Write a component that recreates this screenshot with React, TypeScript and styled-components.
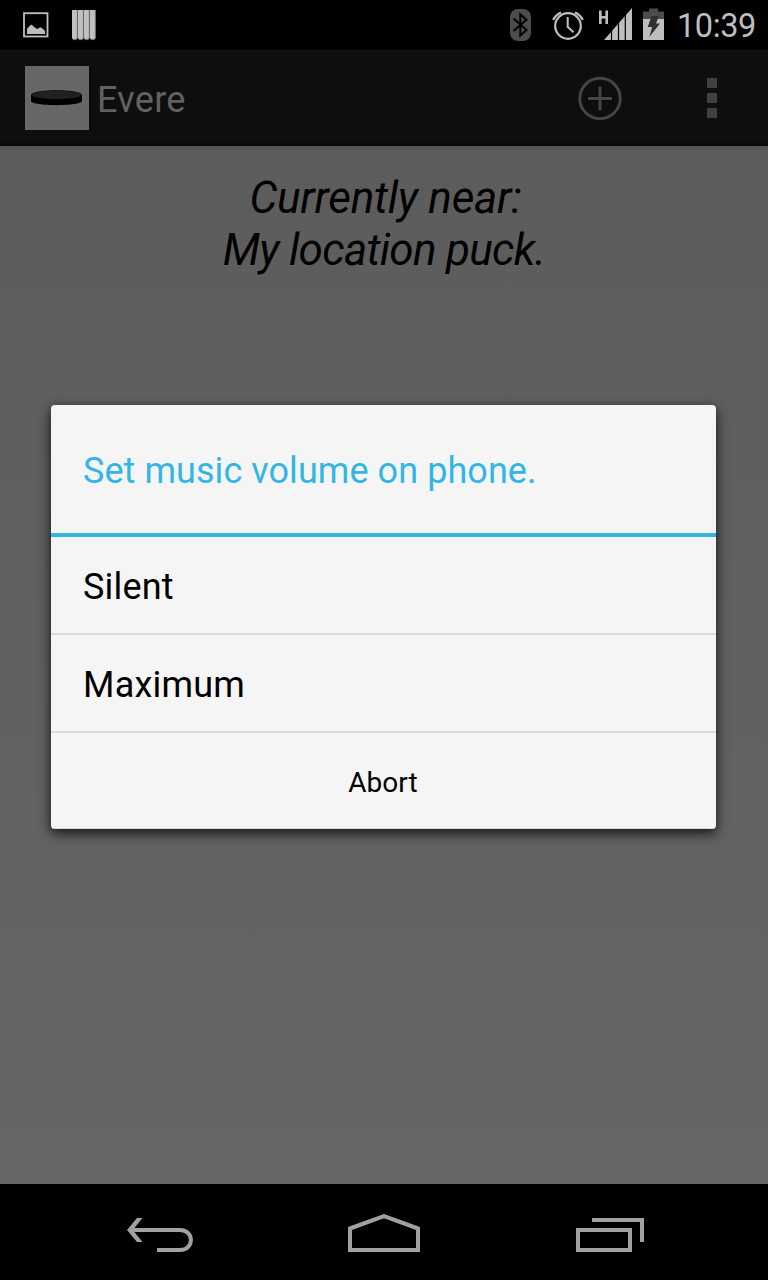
import React from "react";
import styled, { createGlobalStyle } from "styled-components";

const GlobalStyle = createGlobalStyle`
  * { box-sizing: border-box; }
  body { margin: 0; background: #000; font-family: Roboto, "Liberation Sans", sans-serif; }
  svg { display: block; flex: none; }
`;

const Screen = styled.div`
  position: relative;
  width: 768px;
  height: 1280px;
  display: flex;
  flex-direction: column;
  overflow: hidden;
`;

const StatusBar = styled.header`
  height: 50px;
  flex: none;
  display: flex;
  align-items: center;
  justify-content: space-between;
  background: #000;
  color: #bebebe;
`;

const StatusGroup = styled.div`
  display: flex;
  align-items: center;
`;

const Clock = styled.time`
  width: 100px;
  padding: 2px 0 0 9px;
  font-size: 32.5px;
  line-height: 38px;
  letter-spacing: -0.4px;
  white-space: nowrap;
`;

const ActionBar = styled.div`
  height: 96px;
  flex: none;
  display: flex;
  align-items: center;
  padding: 2px 51px 0 25px;
  background: #0e0e0e;
  border-top: 1px solid #151515;
  border-bottom: 3px solid #090909;
`;

const AppTitle = styled.h1`
  flex: 1;
  margin: 4px 0 0 8px;
  font-size: 36px;
  line-height: 42px;
  font-weight: 400;
  letter-spacing: 0.3px;
  color: #616161;
`;

const ActionIcons = styled.div`
  display: flex;
  align-items: center;
  gap: 85px;
`;

const Content = styled.main`
  flex: 1;
  padding-top: 26px;
  background: linear-gradient(#4f4f4f, #5c5c5c 5px, #666 100%);
`;

const Nearby = styled.p`
  margin: 0;
  text-align: center;
  font-size: 44px;
  line-height: 52px;
  font-style: italic;
  color: #000;
`;

const NearbyLine = styled.span<{ $tracking: number; $indent?: number }>`
  display: block;
  padding-left: ${(p) => p.$indent ?? 0}px;
  letter-spacing: ${(p) => p.$tracking}px;
`;

const Dialog = styled.section`
  position: absolute;
  left: 51px;
  top: 405px;
  width: 665px;
  height: 424px;
  display: flex;
  flex-direction: column;
  border-radius: 4px;
  overflow: hidden;
  background: #f5f5f5;
  box-shadow: 0 5px 14px rgba(0, 0, 0, 0.65), 0 2px 6px rgba(0, 0, 0, 0.3);
`;

const DialogTitle = styled.h2`
  height: 132px;
  margin: 0;
  padding: 4px 32px 0;
  border-bottom: 4px solid #33b5e5;
  font-size: 36px;
  line-height: 124px;
  font-weight: 400;
  letter-spacing: 0.06px;
  color: #33b5e5;
`;

const Option = styled.button`
  height: 98px;
  padding: 3px 32px 0;
  border: 0;
  border-bottom: 2px solid #dadada;
  background: transparent;
  text-align: left;
  font: 400 36px/95px Roboto, "Liberation Sans", sans-serif;
  letter-spacing: 0.2px;
  color: #000;
`;

const AbortButton = styled.button`
  height: 96px;
  padding: 3px 1px 0 0;
  border: 0;
  border-bottom: 1px solid #d5d9d9;
  background: transparent;
  font: 400 28px/94px Roboto, "Liberation Sans", sans-serif;
  color: #000;
`;

const NavBar = styled.nav`
  height: 96px;
  flex: none;
  display: grid;
  grid-template-columns: 272px 224px 272px;
  background: #000;
`;

const NavButton = styled.div<{ $pad: string }>`
  padding: ${(p) => p.$pad};
`;

const NotificationIcons = () => (
  <svg width="100" height="50">
    <rect x="24" y="13.2" width="23.5" height="23.3" fill="none" stroke="#bebebe" strokeWidth="1.8" />
    <path d="M27 34V29L29 26.5L31.5 24.5L34.5 27.2L37 29L40.5 27.3L43 29L45 31V34Z" fill="#bebebe" />
    {[72, 78, 84, 90].map((x) => (
      <g key={x}>
        <path d={`M${x} 10H${x + 5}V38L${x + 4} 39.5H${x + 1}L${x} 38Z`} fill="#c0c0c0" />
        <path d={`M${x + 5.4} 10V38.5L${x + 4} 39.6H${x + 0.8}`} fill="none" stroke="#747474" strokeWidth="1" />
      </g>
    ))}
  </svg>
);

const SystemIcons = () => (
  <svg width="168" height="50" viewBox="500 0 168 50">
    <rect x="510" y="9" width="21" height="32" rx="8" fill="#4c4c4c" />
    <path d="M513.5 18.5L526.5 30L520.3 35.5V14.3L526.5 19.8L513.5 31" fill="none" stroke="#000" strokeWidth="2" />
    <g fill="none" stroke="#bebebe" strokeWidth="2">
      <circle cx="568" cy="26" r="12.8" strokeWidth="2.2" />
      <path d="M567.7 17V26.7L573.5 32.2" />
      <path d="M553.2 20Q555.8 14.6 561 12.5M575 12.5Q580.2 14.6 582.8 20" strokeWidth="2.3" />
      <path d="M600.3 10.5V24M606.7 10.5V24M600 17.2H606.6" strokeWidth="2.6" />
    </g>
    <path d="M604 40L632 8V40Z" fill="#bebebe" />
    <path d="M611.5 20V41M618.5 12V41M625.3 8V41" stroke="#000" strokeWidth="1.2" />
    <path d="M643 19V11.5H649V8.5H658V11.5H664V19Z" fill="#4c4c4c" />
    <path d="M643 19H664V40H643Z" fill="#bebebe" />
    <path d="M651.5 16H658.8L656 23.5H660L649.3 37L652.2 27H647.7Z" fill="#303030" />
  </svg>
);

const PuckLogo = () => (
  <svg width="64" height="64">
    <rect width="64" height="64" fill="#676767" />
    <path d="M6 29C6 22.5 57 22.5 57 29V35C57 40.5 6 40.5 6 35Z" fill="#000" />
    <ellipse cx="31.5" cy="28.8" rx="25" ry="4.2" fill="#202020" />
  </svg>
);

const AddIcon = () => (
  <svg width="44" height="44">
    <circle cx="22" cy="22.4" r="20.2" fill="none" stroke="#464646" strokeWidth="2.9" />
    <path d="M22 9.5V35.5M9 22.5H35" stroke="#080808" strokeWidth="5" />
    <path d="M22 10.5V34.5M10 22.5H34" stroke="#464646" strokeWidth="3" />
  </svg>
);

const OverflowIcon = () => (
  <svg width="10" height="40" fill="#404040">
    <rect width="10" height="10" />
    <rect y="15" width="10" height="10" />
    <rect y="30" width="10" height="10" />
  </svg>
);

const BackIcon = () => (
  <svg width="66" height="34" fill="none" stroke="#a1a1a1" strokeWidth="4">
    <path d="M3 12H53C67.5 12 67.5 32 53 32H30" />
    <path d="M10 0H15.5L5.8 12L15.5 24H10L0 12Z" fill="#a1a1a1" stroke="none" />
  </svg>
);

const HomeIcon = () => (
  <svg width="72" height="38" fill="none" stroke="#a1a1a1" strokeWidth="4">
    <path d="M2 14.5L36 2.1L70 14.5V36H2Z" />
  </svg>
);

const RecentsIcon = () => (
  <svg width="68" height="34" fill="none" stroke="#a1a1a1" strokeWidth="4">
    <path d="M2 12H54V32H2Z" />
    <path d="M16 2H66V24" />
  </svg>
);

export default function App() {
  return (
    <>
      <GlobalStyle />
      <Screen>
        <StatusBar>
          <NotificationIcons />
          <StatusGroup>
            <SystemIcons />
            <Clock>10:39</Clock>
          </StatusGroup>
        </StatusBar>
        <ActionBar>
          <PuckLogo />
          <AppTitle>Evere</AppTitle>
          <ActionIcons>
            <AddIcon />
            <OverflowIcon />
          </ActionIcons>
        </ActionBar>
        <Content>
          <Nearby>
            <NearbyLine $tracking={-0.25} $indent={3}>Currently near:</NearbyLine>
            <NearbyLine $tracking={-0.7}>My location puck.</NearbyLine>
          </Nearby>
        </Content>
        <NavBar>
          <NavButton $pad="34px 0 0 127px"><BackIcon /></NavButton>
          <NavButton $pad="30px 0 0 76px"><HomeIcon /></NavButton>
          <NavButton $pad="34px 0 0 80px"><RecentsIcon /></NavButton>
        </NavBar>
        <Dialog role="dialog">
          <DialogTitle>Set music volume on phone.</DialogTitle>
          <Option>Silent</Option>
          <Option>Maximum</Option>
          <AbortButton>Abort</AbortButton>
        </Dialog>
      </Screen>
    </>
  );
}
